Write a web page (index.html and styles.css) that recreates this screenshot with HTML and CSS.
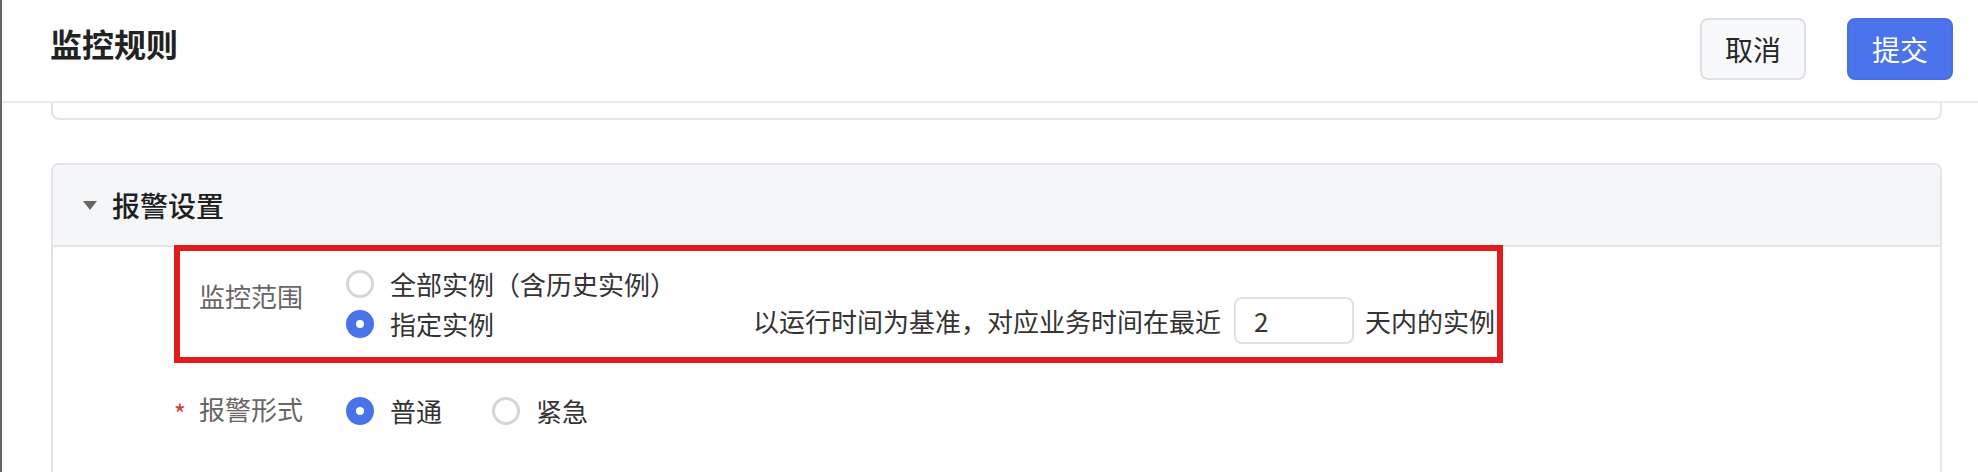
FILE: index.html
```html
<!DOCTYPE html>
<html lang="zh-CN">
<head>
    <meta charset="UTF-8">
    <meta name="viewport" content="width=device-width, initial-scale=1.0">
    <title>监控规则</title>
    <link rel="stylesheet" href="styles.css">
</head>
<body>
    <header class="page-header">
        <h1 class="page-title">监控规则</h1>
        <div class="actions">
            <button class="btn btn-default">取消</button>
            <button class="btn btn-primary">提交</button>
        </div>
    </header>
    <main class="content">
        <!-- previous panel, scrolled up under the header -->
        <div class="panel panel-tail"></div>

        <section class="panel">
            <div class="panel-head">
                <span class="caret"></span>
                <h2>报警设置</h2>
            </div>
            <div class="panel-body">
                <div class="form-item form-item-marked">
                    <label class="form-label form-label-top">监控范围</label>
                    <div class="radio-group radio-group-column">
                        <label class="radio"><span class="radio-dot"></span>全部实例（含历史实例）</label>
                        <label class="radio checked"><span class="radio-dot"></span>指定实例</label>
                    </div>
                    <div class="scope-extra">
                        以运行时间为基准，对应业务时间在最近<input class="num-input" type="text" value="2">天内的实例
                    </div>
                </div>
                <div class="form-item form-item-next">
                    <label class="form-label"><span class="required">*</span>报警形式</label>
                    <div class="radio-group">
                        <label class="radio checked"><span class="radio-dot"></span>普通</label>
                        <label class="radio"><span class="radio-dot"></span>紧急</label>
                    </div>
                </div>
            </div>
        </section>
    </main>
</body>
</html>
```

FILE: styles.css
```css
body {
    font-family: "Noto Sans CJK SC", "Noto Sans", sans-serif;
    margin: 0;
    padding: 0;
    background-color: #fff;
    border-left: 2px solid #666;
    min-height: 100vh;
    box-sizing: border-box;
    color: #333;
}

.page-header {
    display: flex;
    justify-content: space-between;
    align-items: center;
    height: 101px;
    padding: 0 25px 0 48px;
    border-bottom: 2px solid #ebebee;
}

.page-title {
    margin: 0 0 16px 0;
    font-size: 32px;
    line-height: 1;
    font-weight: 600;
    color: #222;
}

.actions {
    display: flex;
    margin-bottom: 3px;
}

.btn {
    width: 106px;
    height: 62px;
    border-radius: 8px;
    border: 2px solid;
    font-family: inherit;
    font-size: 28px;
    padding: 0;
    cursor: pointer;
}

.btn-default {
    background-color: #f8f9fb;
    border-color: #dfe0e4;
    color: #262626;
}

.btn-primary {
    background-color: #4b73ea;
    border-color: #4a70e4;
    color: #fff;
    margin-left: 41px;
}

.content {
    padding: 0 36px 0 49px;
}

.panel {
    border: 2px solid #e4e5ea;
    border-radius: 8px;
    margin-top: 43px;
}

.panel-tail {
    margin-top: 0;
    height: 15px;
    border-top: 0;
    border-radius: 0 0 8px 8px;
}

.panel-head {
    display: flex;
    align-items: center;
    height: 80px;
    padding-left: 30px;
    background-color: #f5f6f8;
    border-bottom: 2px solid #e4e5ea;
    border-radius: 6px 6px 0 0;
}

.caret {
    width: 0;
    height: 0;
    border-left: 7px solid transparent;
    border-right: 7px solid transparent;
    border-top: 9px solid #666;
    margin-right: 15px;
}

.panel-head h2 {
    margin: 0;
    font-size: 28px;
    font-weight: 500;
    color: #1f1f1f;
}

.panel-body {
    padding: 0 0 40px 121px;
}

.form-item {
    display: flex;
    width: 1329px;
    box-sizing: border-box;
    border: 6px solid transparent;
    padding: 13px 0;
    margin-top: -2px;
}

.form-item-marked {
    border-color: #e21c1b;
}

.form-item-next {
    margin-top: 7px;
}

.form-label {
    display: flex;
    justify-content: flex-end;
    flex-shrink: 0;
    width: 123px;
    margin-right: 43px;
    font-size: 26px;
    line-height: 40px;
    color: #666;
    white-space: nowrap;
}

.form-label-top {
    padding-top: 12px;
}

.required {
    color: #d8382c;
    margin-right: 13px;
    padding-top: 4px;
}

.radio-group {
    display: flex;
    gap: 50px;
}

.radio-group-column {
    flex-direction: column;
    gap: 0;
    width: 407px;
    flex-shrink: 0;
}

.radio {
    display: flex;
    align-items: center;
    font-size: 26px;
    line-height: 40px;
    color: #333;
    cursor: pointer;
    white-space: nowrap;
}

.radio-dot {
    width: 28px;
    height: 28px;
    box-sizing: border-box;
    border: 3px solid #d3d6dc;
    border-radius: 50%;
    margin-right: 16px;
    background-color: #fff;
}

.radio.checked .radio-dot {
    border: 10px solid #4a73ea;
}

.scope-extra {
    align-self: flex-end;
    display: flex;
    align-items: center;
    font-size: 26px;
    line-height: 40px;
    color: #333;
    white-space: nowrap;
}

.num-input {
    width: 120px;
    height: 47px;
    box-sizing: border-box;
    border: 2px solid #dfe1e6;
    border-radius: 8px;
    padding: 0 0 0 18px;
    margin: 0 11px 0 13px;
    font-family: inherit;
    font-size: 26px;
    color: #333;
    outline: none;
}
```
